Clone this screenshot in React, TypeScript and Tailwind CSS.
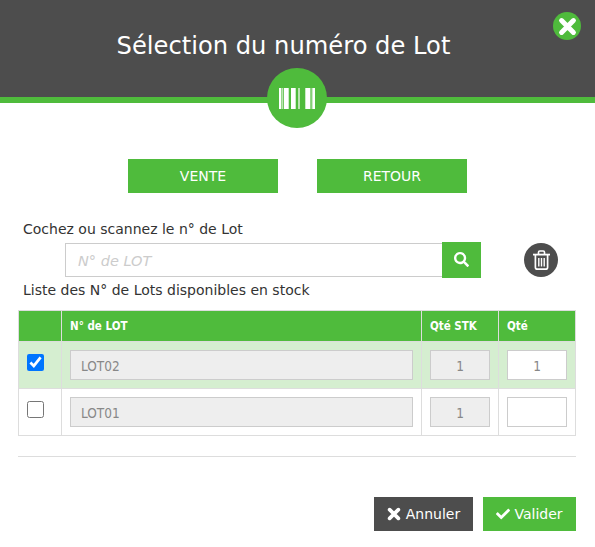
import { FaCheck, FaSearch } from 'react-icons/fa';

const rows = [
    { lot: 'LOT02', stock: '1', qty: '1', checked: true },
    { lot: 'LOT01', stock: '1', qty: '', checked: false },
];

const bars = [
    [0, 2.4],
    [3.4, 0.8],
    [5, 4.7],
    [12, 4.7],
    [19.4, 1.2],
    [26.3, 4.7],
    [31.6, 0.7],
    [33.3, 2.7],
];

function BarcodeIcon() {
    return (
        <svg width="36" height="21" viewBox="0 0 36 21" fill="white">
            {bars.map(([x, w]) => (
                <rect key={x} x={x} y="0" width={w} height="21" />
            ))}
        </svg>
    );
}

function CrossIcon({ size, weight }: { size: number; weight: number }) {
    return (
        <svg width={size} height={size} viewBox="0 0 16 16" fill="none" stroke="white" strokeWidth={weight} strokeLinecap="round">
            <path d="M3 3l10 10M13 3L3 13" />
        </svg>
    );
}

function TrashIcon() {
    return (
        <svg width="17" height="20" viewBox="0 0 17 20" fill="none" stroke="white">
            <path d="M0 4.6h17" strokeWidth="1.8" />
            <path d="M5.5 4V2.2c0-.7.5-1.2 1.2-1.2h3.6c.7 0 1.2.5 1.2 1.2V4" strokeWidth="1.6" />
            <path d="M2.4 5v12.6c0 1 .7 1.6 1.6 1.6h9c.9 0 1.6-.6 1.6-1.6V5" strokeWidth="1.7" />
            <path d="M5.8 8v8.6M8.5 8v8.6M11.2 8v8.6" strokeWidth="1.4" />
        </svg>
    );
}

export default function App() {
    return (
        <div className="relative h-[547px] w-[595px] overflow-hidden bg-white font-['DejaVu_Sans',sans-serif] text-[14px] text-[#333]">
            <header className="relative h-[103px] border-b-[6px] border-[#4fbb3c] bg-[#4d4d4d] pt-[30px] pr-[28px] text-center text-[24.2px] leading-[32px] text-white">
                Sélection du numéro de Lot
                <button className="absolute top-[12px] right-[14px] flex h-7 w-7 items-center justify-center rounded-full bg-[#4fbb3c]">
                    <CrossIcon size={19} weight={4.2} />
                </button>
                <div className="absolute top-[68px] left-[267px] flex h-[60px] w-[60px] items-center justify-center rounded-full bg-[#4fbb3c]">
                    <BarcodeIcon />
                </div>
            </header>

            <div className="mt-[56px] flex justify-center gap-[39px]">
                <button className="h-[34px] w-[150px] bg-[#4fbb3c] text-[14px] text-white">VENTE</button>
                <button className="h-[34px] w-[150px] bg-[#4fbb3c] text-[14px] text-white">RETOUR</button>
            </div>

            <p className="mt-[26px] ml-[23px] leading-[20px]">Cochez ou scannez le n° de Lot</p>
            <div className="mt-[3px] ml-[65px] flex items-center">
                <input
                    placeholder="N° de LOT"
                    className="h-[34px] w-[378px] border border-[#ccc] px-3 pt-[2px] text-[14.5px] italic placeholder:text-[#ccc]"
                />
                <button className="-ml-px flex h-[36px] w-[39px] items-center justify-center bg-[#4fbb3c] pb-[2px] text-[15px] text-white">
                    <FaSearch />
                </button>
                <button className="ml-[43px] flex h-[34px] w-[34px] items-center justify-center rounded-full bg-[#4d4d4d]">
                    <TrashIcon />
                </button>
            </div>
            <p className="mt-[2px] ml-[23px] leading-[20px]">Liste des N° de Lots disponibles en stock</p>

            <table className="mt-[10px] ml-[18px] w-[558px] table-fixed border-collapse font-['DejaVu_Sans_Condensed','DejaVu_Sans',sans-serif]">
                <thead>
                    <tr className="h-[31px] bg-[#4fbb3c] text-left text-[11.5px] text-white">
                        <th className="w-[43px] border border-[#ddd]"></th>
                        <th className="w-[360px] border border-[#ddd] pt-[2px] pl-2 font-bold">N° de LOT</th>
                        <th className="w-[77px] border border-[#ddd] pt-[2px] pl-2 font-bold">Qté STK</th>
                        <th className="border border-[#ddd] pt-[2px] pl-2 font-bold">Qté</th>
                    </tr>
                </thead>
                <tbody>
                    {rows.map((r) => (
                        <tr key={r.lot} className={r.checked ? 'h-[47px] bg-[#d5eed0]' : 'h-[47px] bg-white'}>
                            <td className="border border-[#ddd] pl-2">
                                <input type="checkbox" readOnly checked={r.checked} className="mb-[6px] block h-[17px] w-[17px] accent-[#0075ff]" />
                            </td>
                            <td className="border border-[#ddd] px-2">
                                <div className="flex h-[30px] items-center border border-[#ccc] bg-[#eee] pt-[2px] pl-[10px] text-[13.5px] text-[#888]">{r.lot}</div>
                            </td>
                            <td className="border border-[#ddd] px-2">
                                <div className="flex h-[30px] items-center justify-center border border-[#ccc] bg-[#eee] pt-[2px] text-[13.5px] text-[#888]">{r.stock}</div>
                            </td>
                            <td className="border border-[#ddd] px-2">
                                <div className="flex h-[30px] items-center justify-center border border-[#ccc] bg-white pt-[2px] text-[13.5px] text-[#888]">{r.qty}</div>
                            </td>
                        </tr>
                    ))}
                </tbody>
            </table>

            <hr className="mt-[20px] mr-[19px] ml-[18px] border-[#ddd]" />

            <div className="mt-[40px] mr-[19px] flex justify-end gap-[10px]">
                <button className="flex h-[34px] w-[99px] items-center justify-center gap-[5px] bg-[#4d4d4d] text-[14px] text-white">
                    <CrossIcon size={14} weight={4.2} /> Annuler
                </button>
                <button className="flex h-[34px] w-[93px] items-center justify-center gap-[4px] bg-[#4fbb3c] text-[14px] text-white">
                    <FaCheck className="text-[14px]" /> Valider
                </button>
            </div>
        </div>
    );
}
